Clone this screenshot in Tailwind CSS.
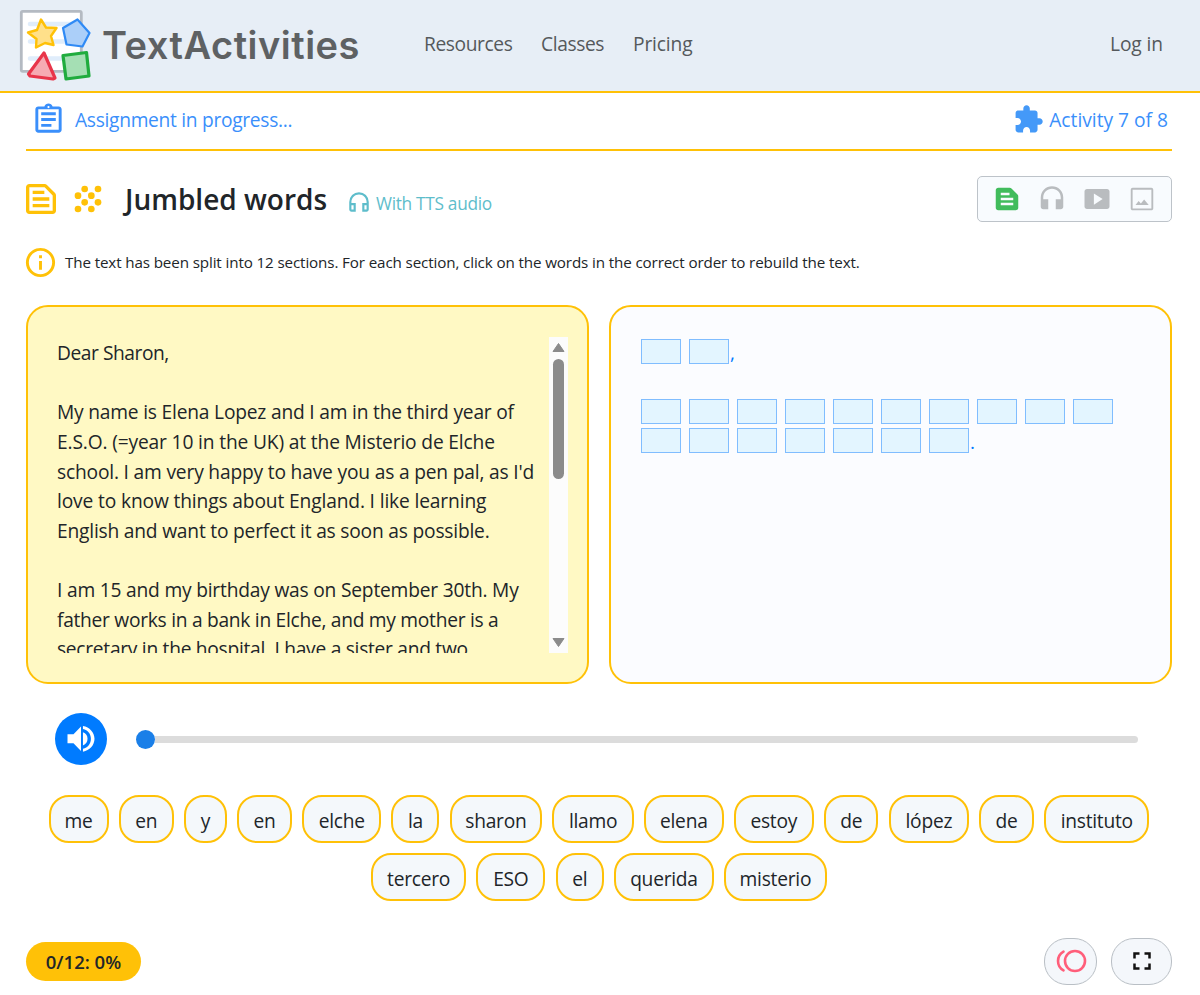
<!DOCTYPE html>
<html lang="en">
<head>
<meta charset="utf-8">
<title>TextActivities</title>
<script src="https://cdn.jsdelivr.net/npm/@tailwindcss/browser@4"></script>
</head>
<body class="bg-white text-[#212529] font-['Open_Sans',sans-serif] w-[1200px] h-[995px] overflow-hidden">
<header class="h-[93px] bg-[#e7eef6] border-b-2 border-[#ffc107] flex items-start pl-[19px] pr-[37px] text-[#55595c]">
  <svg class="mt-[9px] w-[74px] h-[74px] shrink-0" viewBox="0 0 74 74">
    <rect x="2.3" y="2.3" width="60" height="60" rx="1.5" fill="#fff" stroke="#b4bac2" stroke-width="2.8"/>
    <path d="M11 15h44M11 32.500h44M11 49.500h44" stroke="#e0edfb" stroke-width="4.500" stroke-linecap="round"/>
    <path d="M22 10.500 27 18.500 37.500 19 32 27 34.500 36 26 34 17 38.500 17.500 30 9 23.500 18 21Z" fill="#ffe08a" stroke="#ffc107" stroke-width="2.400" stroke-linejoin="round"/>
    <path d="M58.500 10.500 70.500 24 63.500 37.500 47.500 35.500 44 19Z" fill="#abcff9" stroke="#2f8af5" stroke-width="2.200" stroke-linejoin="round"/>
    <path d="M25 44 36 69 34 70 11 67 9.500 65Z" fill="#f6abb3" stroke="#e8354a" stroke-width="3.200" stroke-linejoin="round"/>
    <path d="M44 46.500 67.500 43.500 70 67 47 70Z" fill="#a5dfb4" stroke="#20ac3e" stroke-width="3.200" stroke-linejoin="round"/>
  </svg>
  <div class="ml-[9px] mt-[20px] w-[257px] h-[50px] leading-[50px] text-[38px] font-semibold font-['Inter'] tracking-[0.5px] text-[#5e6163] whitespace-nowrap">TextActivities</div>
  <nav class="ml-[65px] mt-[29px] flex text-[19.2px] tracking-[-0.4px] leading-[30px] whitespace-nowrap">
    <a class="w-[117px]">Resources</a><a class="w-[92px]">Classes</a><a class="tracking-[-0.15px]">Pricing</a>
  </nav>
  <a class="ml-auto mt-[29px] text-[19.2px] tracking-[-0.1px] leading-[30px]">Log in</a>
</header>

<main class="px-[26px]">
  <div class="w-[1146px] h-[58px] border-b-2 border-[#ffc107] flex items-start pl-[4px] pr-[4px] text-[#3a8ffb] text-[19.2px] leading-[30px] whitespace-nowrap">
    <svg class="mt-[9px] ml-[1px] size-[35px]" viewBox="0 0 24 24" fill="currentColor"><path d="M7 15h7v2H7zm0-4h10v2H7zm0-4h10v2H7zm12-4h-4.180C14.400 1.840 13.300 1 12 1s-2.400.84-2.820 2H5c-1.100 0-2 .9-2 2v14c0 1.100.9 2 2 2h14c1.100 0 2-.9 2-2V5c0-1.100-.9-2-2-2zm-7-.25c.41 0 .75.34.75.75s-.34.75-.75.75-.75-.34-.75-.75.34-.75.75-.75zM19 19H5V5h14v14z"/></svg>
    <span class="ml-[9px] mt-[12px] tracking-[-0.3px]">Assignment in progress...</span>
    <svg class="ml-auto mt-[11px] size-[31px]" viewBox="0 0 24 24" fill="#4499f8"><path d="M20.500 11H19V7c0-1.100-.9-2-2-2h-4V3.500C13 2.120 11.880 1 10.500 1S8 2.120 8 3.500V5H4c-1.100 0-1.990.9-1.990 2v3.800H3.500c1.490 0 2.700 1.210 2.700 2.700s-1.210 2.700-2.700 2.700H2V20c0 1.100.9 2 2 2h3.800v-1.500c0-1.490 1.210-2.700 2.700-2.700 1.490 0 2.700 1.210 2.700 2.700V22H17c1.100 0 2-.9 2-2v-4h1.500c1.380 0 2.500-1.120 2.500-2.500S21.880 11 20.500 11z"/></svg>
    <span class="ml-[5px] mt-[12px]">Activity 7 of 8</span>
  </div>

  <div class="w-[1146px] h-[94px] flex items-start whitespace-nowrap">
    <svg class="-ml-[5px] mt-[28px] size-[40px] text-[#ffc107]" viewBox="0 0 24 24" fill="currentColor"><path d="M14.170 5L19 9.830V19H5V5h9.170m0-2H5c-1.100 0-2 .9-2 2v14c0 1.100.9 2 2 2h14c1.100 0 2-.9 2-2V9.830c0-.53-.21-1.040-.59-1.410l-4.830-4.830c-.37-.38-.88-.59-1.410-.59zM7 15h10v2H7v-2zm0-4h10v2H7v-2zm0-4h7v2H7V7z"/></svg>
    <svg class="ml-[7px] mt-[28px] size-[40px] text-[#ffc107]" viewBox="0 0 24 24" fill="currentColor"><circle cx="10" cy="6" r="2"/><circle cx="18" cy="6" r="2"/><circle cx="6" cy="10" r="2"/><circle cx="14" cy="10" r="2"/><circle cx="10" cy="14" r="2"/><circle cx="18" cy="14" r="2"/><circle cx="6" cy="18" r="2"/><circle cx="14" cy="18" r="2"/></svg>
    <h1 class="ml-[17px] mt-[28px] w-[221px] text-[28px] leading-[40px] font-semibold">Jumbled words</h1>
    <svg class="mt-[38px] size-[26px] text-[#5ebdcb]" viewBox="0 0 24 24" fill="currentColor"><path d="M12 3a9 9 0 0 0-9 9v7c0 1.100.9 2 2 2h4v-8H5v-1c0-3.870 3.130-7 7-7s7 3.130 7 7v1h-4v8h4c1.100 0 2-.9 2-2v-7a9 9 0 0 0-9-9zM7 15v4H5v-4h2zm12 4h-2v-4h2v4z"/></svg>
    <span class="ml-[4px] mt-[38px] text-[17.3px] tracking-[-0.3px] leading-[30px] text-[#5ebdcb]">With TTS audio</span>
    <div class="ml-auto mt-[25px] w-[195px] h-[46px] rounded-[5px] border border-[#bdc3c9] bg-[#f8fbfe] flex items-center justify-center gap-[15px] text-[#b9bcbf]">
      <svg class="size-[30px] text-[#41bc5c]" viewBox="0 0 24 24" fill="currentColor"><path d="M20.410 8.410l-4.830-4.830c-.37-.37-.88-.58-1.410-.58H5c-1.100 0-2 .9-2 2v14c0 1.100.9 2 2 2h14c1.100 0 2-.9 2-2V9.830c0-.53-.21-1.040-.59-1.420zM7 7h7v2H7V7zm10 10H7v-2h10v2zm0-4H7v-2h10v2z"/></svg>
      <svg class="size-[30px] -mt-[3px]" viewBox="0 0 24 24" fill="currentColor"><path d="M12 2.500a9 9 0 0 0-9 9v7.500c0 1.100.9 2 2 2h4v-8H5v-1.500c0-3.870 3.130-7 7-7s7 3.130 7 7v1.500h-4v8h4c1.100 0 2-.9 2-2v-7.500a9 9 0 0 0-9-9z"/></svg>
      <svg class="size-[30px]" viewBox="0 0 24 24" fill="currentColor"><path d="M20 4H4c-1.100 0-2 .9-2 2v12c0 1.100.9 2 2 2h16c1.100 0 2-.9 2-2V6c0-1.100-.9-2-2-2zM9.500 16.500v-9l7 4.500-7 4.500z"/></svg>
      <svg class="size-[30px]" viewBox="0 0 24 24" fill="currentColor"><path d="M19.500 4.500v15h-15v-15h15m0-1.500h-15C3.700 3 3 3.700 3 4.500v15c0 .8.7 1.500 1.500 1.500h15c.8 0 1.500-.7 1.500-1.500v-15c0-.8-.7-1.500-1.500-1.500zM6.800 16.700l2.500-3.200 1.800 2.100 2.600-3.300 3.700 4.400z"/></svg>
    </div>
  </div>

  <div class="h-[60px] flex items-start whitespace-nowrap">
    <svg class="-ml-[3px] size-[35px] text-[#ffc107]" viewBox="0 0 24 24" fill="currentColor"><path d="M11 7h2v2h-2zm0 4h2v6h-2zm1-9C6.480 2 2 6.480 2 12s4.480 10 10 10 10-4.480 10-10S17.520 2 12 2zm0 18c-4.410 0-8-3.590-8-8s3.590-8 8-8 8 3.590 8 8-3.590 8-8 8z"/></svg>
    <p class="ml-[7px] mt-[2px] text-[15.2px] tracking-[-0.126px] leading-[30px]">The text has been split into 12 sections. For each section, click on the words in the correct order to rebuild the text.</p>
  </div>

  <div class="w-[1146px] flex gap-[20px]">
    <section class="w-[563px] h-[379px] rounded-[22px] border-2 border-[#ffc107] bg-[#fff9c4] pl-[29px] pr-[19px] pt-[30px] flex justify-between">
      <div class="h-[316px] pt-px overflow-hidden text-[19.2px] tracking-[-0.2px] leading-[29.625px] whitespace-nowrap">
        <p class="tracking-[-0.45px]">Dear Sharon,</p>
        <p class="mt-[29.625px]">My name is Elena Lopez and I am in the third year of</p>
        <p class="tracking-[-0.15px]">E.S.O. (=year 10 in the UK) at the Misterio de Elche</p>
        <p class="tracking-[-0.18px]">school. I am very happy to have you as a pen pal, as I'd</p>
        <p class="tracking-[-0.14px]">love to know things about England. I like learning</p>
        <p class="tracking-[-0.2px]">English and want to perfect it as soon as possible.</p>
        <p class="mt-[29.625px]">I am 15 and my birthday was on September 30th. My</p>
        <p class="tracking-[-0.28px]">father works in a bank in Elche, and my mother is a</p>
        <p class="tracking-[-0.28px]">secretary in the hospital. I have a sister and two</p>
      </div>
      <div class="w-[19px] h-[316px] shrink-0 bg-[#fcfcfc] flex flex-col items-center">
        <svg class="mt-[5px] w-[13px] h-[11px]" viewBox="0 0 13 11"><path d="M6.500 1.500 12 9.500H1Z" fill="#8b8b8b" stroke="#8b8b8b" stroke-linejoin="round"/></svg>
        <div class="mt-[6px] w-[11px] h-[120px] rounded-full bg-[#8b8b8b]"></div>
        <svg class="mt-auto mb-[5px] w-[13px] h-[11px]" viewBox="0 0 13 11"><path d="M6.500 9.500 12 1.500H1Z" fill="#8b8b8b" stroke="#8b8b8b" stroke-linejoin="round"/></svg>
      </div>
    </section>
    <section class="w-[563px] h-[379px] rounded-[22px] border-2 border-[#ffc107] bg-[#fbfcff] pl-[30px] pt-[32px] text-[#007bff] text-[19px] leading-[30px]">
      <div class="h-[60px] flex gap-[8px]"><i class="w-[40px] h-[25px] border border-[#80bdff] bg-[#e3f5ff]"></i><i class="w-[40px] h-[25px] border border-[#80bdff] bg-[#e3f5ff]"></i><span class="-ml-[7px] -mt-px">,</span></div>
      <div class="h-[29px] flex gap-[7.990px]" id="row-a"></div>
      <div class="h-[30px] flex gap-[7.990px]" id="row-b"></div>
    </section>
  </div>

  <div class="h-[111px] flex items-center pl-[29px]">
    <div class="-mt-px size-[52px] rounded-full bg-[#007bff] flex items-center justify-center">
      <svg class="size-[36px]" viewBox="0 0 24 24" fill="#fff"><path d="M3 8.800v6h4l5 5.200V3.600L7 8.800zM13.300 7.500v8.800a4.700 4.700 0 0 0 0-8.800zM13.300 3.300v2c3.300.6 5.300 3.300 5.300 6.600s-2 6-5.300 6.600v2c4.400-.7 7.700-4.300 7.700-8.600s-3.300-7.900-7.700-8.600z"/></svg>
    </div>
    <div class="-mt-px ml-[29px] w-[1002px] flex items-center"><div class="size-[19px] rounded-full bg-[#1a7fe8] shrink-0"></div><div class="grow h-[7px] rounded-r-full bg-[#dcdcdc]"></div></div>
  </div>

  <div class="w-[1146px] flex flex-wrap justify-center gap-x-[10.200px] gap-y-[10px] text-[19.2px] tracking-[-0.25px] leading-[47px] text-center" id="words"></div>

  <footer class="mt-[37px] w-[1146px] h-[47px] flex items-center">
    <div class="w-[115px] h-[39px] rounded-full bg-[#ffc107] text-[18.500px] leading-[40px] font-semibold text-center">0/12: 0%</div>
    <div class="-mt-px ml-auto w-[53px] h-[47px] rounded-[23px] border border-[#b9bfc5] bg-[#f4f7fb] flex items-center justify-center">
      <svg class="w-[32px] h-[24px]" viewBox="0 0 32 24" fill="none" stroke="#ff5e7a" stroke-width="2.600"><circle cx="20" cy="12" r="10"/><path d="M8.500 2.600a10.800 10.800 0 0 0 0 18.800" stroke-linecap="round"/></svg>
    </div>
    <div class="-mt-px ml-[14px] w-[61px] h-[47px] rounded-[23px] border border-[#b9bfc5] bg-[#f4f7fb] flex items-center justify-center">
      <svg class="size-[30px]" viewBox="0 0 24 24" fill="#111"><path d="M7 14H5v5h5v-2H7v-3zm-2-4h2V7h3V5H5v5zm12 7h-3v2h5v-5h-2v3zM14 5v2h3v3h2V5h-5z"/></svg>
    </div>
  </footer>
</main>
<script>
const blank = '<i class="w-[40px] h-[25px] shrink-0 border border-[#80bdff] bg-[#e3f5ff]"></i>';
document.getElementById('row-a').innerHTML = blank.repeat(10);
document.getElementById('row-b').innerHTML = blank.repeat(7) + '<span class="-ml-[7px] -mt-px">.</span>';
const words = [['me',60],['en',55],['y',43],['en',55],['elche',79],['la',48],['sharon',92.5],['llamo',81.5],['elena',79.5],['estoy',80],['de',54.5],['lópez',80.5],['de',54.5],['instituto',105.5],['tercero',95],['ESO',69],['el',48.5],['querida',99.5],['misterio',103]];
document.getElementById('words').innerHTML = words.map(([t, w]) => `<button class="h-[48px] rounded-[20px] border-2 border-[#ffc107] bg-[#f4f8fb]" style="width:${w}px">${t}</button>`).join('');
</script>
</body>
</html>
